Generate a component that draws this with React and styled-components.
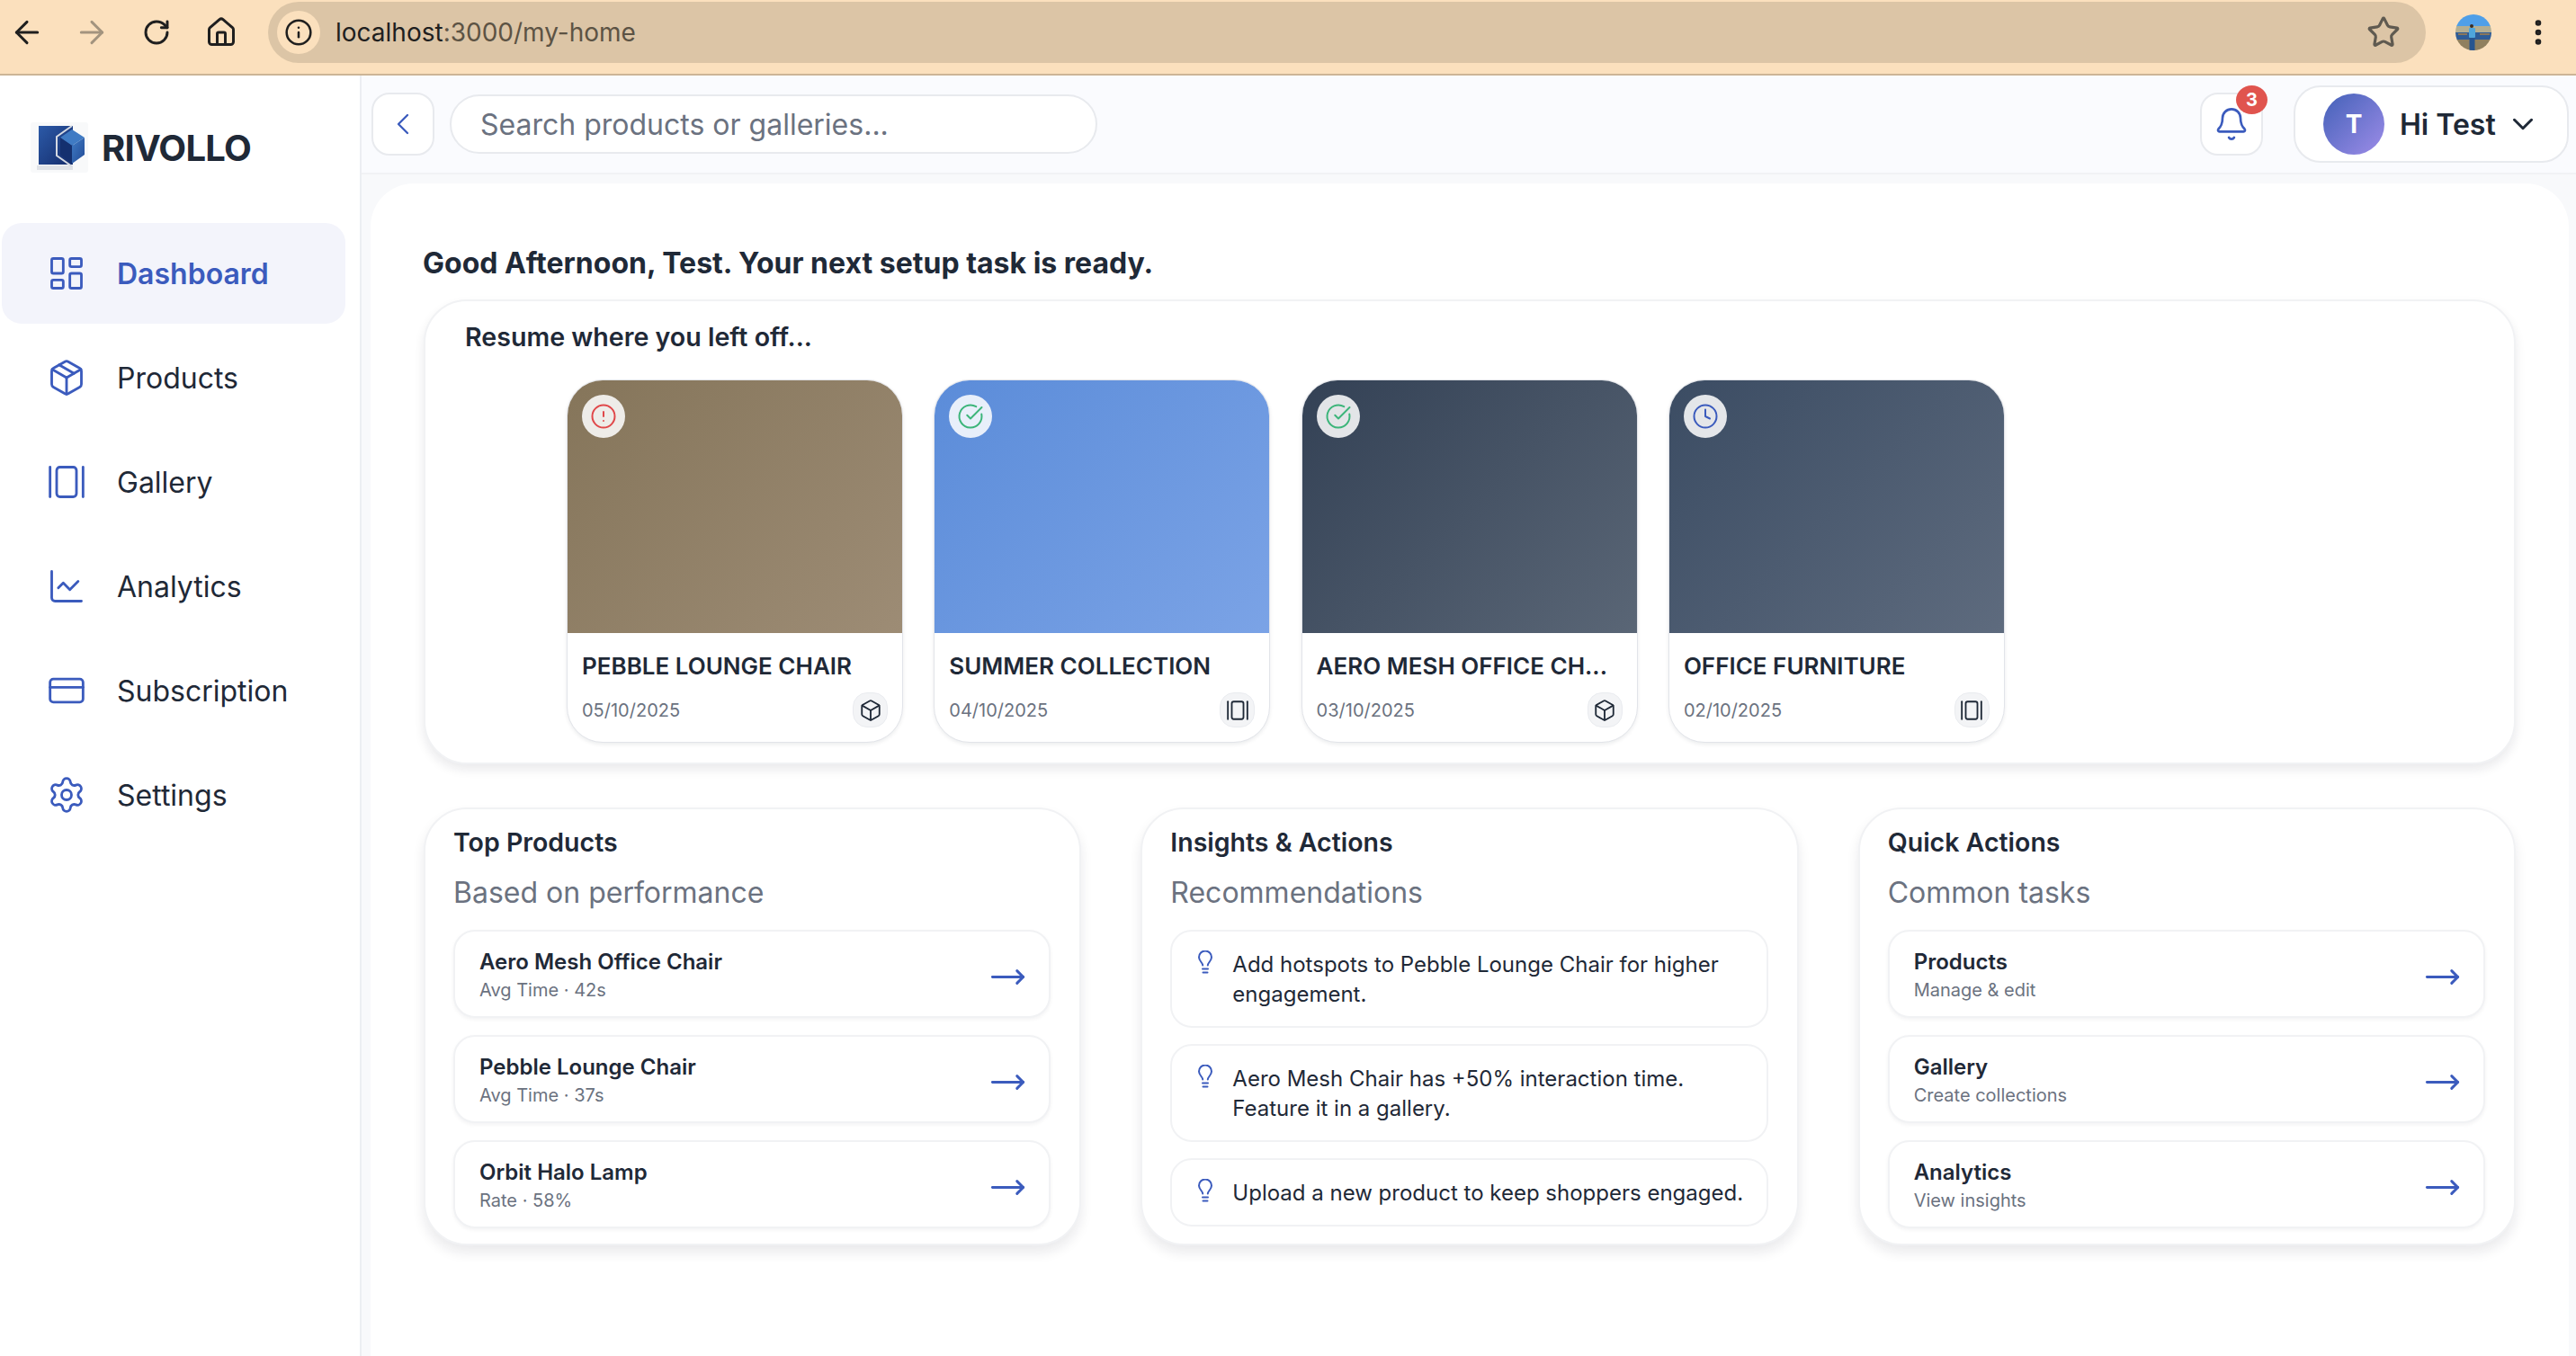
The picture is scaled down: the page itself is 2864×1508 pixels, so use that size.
import React from 'react';
import styled, { createGlobalStyle } from 'styled-components';
import {
  ArrowLeft, ArrowRight, RotateCw, House, Info, Star, EllipsisVertical,
  LayoutDashboard, Package, GalleryHorizontal, ChartLine, CreditCard, Settings,
  ChevronLeft, ChevronDown, Bell, CircleAlert, CircleCheckBig, Clock, Box, MoveRight,
} from 'lucide-react';

const BLUE = '#3b5bbd';
const INK = '#1f2937';
const MUTED = '#6b7280';

const GlobalStyle = createGlobalStyle`
  html, body { margin: 0; padding: 0; height: 100%; }
  body { font-family: Inter, "Liberation Sans", sans-serif; color: ${INK}; background: #fff; }
  #root { height: 100%; }
  * { box-sizing: border-box; }
`;

const Page = styled.div`
  height: 100vh;
  display: flex;
  flex-direction: column;
  overflow: hidden;
`;

/* browser chrome */
const BrowserBar = styled.div`
  height: 84px;
  flex: none;
  display: flex;
  align-items: flex-start;
  gap: 32px;
  padding: 2px 24px 0 10px;
  background: #fbe0bd;
  border-bottom: 2px solid #ccb596;
`;
const ChromeButton = styled.div`
  height: 68px;
  display: flex;
  align-items: center;
  color: ${p => (p.$dim ? '#a3947f' : '#1f1f1f')};
`;
const UrlPill = styled.div`
  flex: 1;
  height: 68px;
  display: flex;
  align-items: center;
  gap: 17px;
  padding: 0 28px 0 10px;
  border-radius: 34px;
  background: #dcc5a6;
`;
const InfoChip = styled.div`
  width: 48px;
  height: 48px;
  border-radius: 50%;
  background: #fbe0bd;
  display: flex;
  align-items: center;
  justify-content: center;
  color: #1f1f1f;
`;
const UrlText = styled.div`
  flex: 1;
  font-size: 28px;
  color: #5c5344;
  span { color: #1f1f1f; }
`;
const ChromeRight = styled.div`
  height: 68px;
  display: flex;
  align-items: center;
  gap: 34px;
  margin-left: 1px;
  color: #1f1f1f;
`;

/* app shell */
const Shell = styled.div`
  flex: 1;
  min-height: 0;
  display: flex;
`;
const Sidebar = styled.aside`
  width: 402px;
  flex: none;
  padding: 52px 0 0 2px;
  background: #fff;
  border-right: 2px solid #eceef2;
`;
const Logo = styled.div`
  display: flex;
  align-items: center;
  gap: 15px;
  padding-left: 32px;
  margin-bottom: 56px;
`;
const LogoWord = styled.div`
  font-size: 40px;
  font-weight: 700;
  letter-spacing: -0.8px;
  color: ${INK};
`;
const Nav = styled.nav`
  width: 382px;
  display: flex;
  flex-direction: column;
  gap: 4px;
`;
const NavItem = styled.div`
  height: 112px;
  display: flex;
  align-items: center;
  gap: 34px;
  padding-left: 50px;
  border-radius: 22px;
  font-size: 32px;
  font-weight: ${p => (p.$active ? 600 : 400)};
  color: ${p => (p.$active ? BLUE : INK)};
  background: ${p => (p.$active ? '#f3f4fb' : 'transparent')};
  svg { color: ${BLUE}; }
`;

const Main = styled.div`
  flex: 1;
  min-width: 0;
  display: flex;
  flex-direction: column;
  background: #f8f9fb;
`;
const TopBar = styled.header`
  height: 110px;
  flex: none;
  display: flex;
  align-items: center;
  padding: 0 8px 0 11px;
  background: #fafbfe;
  border-bottom: 2px solid #f1f2f5;
`;
const SquareButton = styled.div`
  position: relative;
  width: 70px;
  height: 70px;
  flex: none;
  display: flex;
  align-items: center;
  justify-content: center;
  background: #fff;
  border: 2px solid #e8eaee;
  border-radius: 20px;
  color: ${BLUE};
`;
const SearchBox = styled.div`
  width: 720px;
  height: 66px;
  margin-left: 17px;
  padding-left: 32px;
  display: flex;
  align-items: center;
  border: 2px solid #e8eaee;
  border-radius: 33px;
  background: #fff;
  font-size: 32px;
  color: ${MUTED};
`;
const Spacer = styled.div`
  flex: 1;
`;
const Badge = styled.div`
  position: absolute;
  top: -10px;
  right: -7px;
  width: 35px;
  height: 32px;
  border-radius: 50%;
  display: flex;
  align-items: center;
  justify-content: center;
  background: #e0544e;
  color: #fff;
  font-size: 20px;
  font-weight: 700;
`;
const UserPill = styled.div`
  width: 306px;
  height: 86px;
  margin-left: 34px;
  padding-left: 31px;
  display: flex;
  align-items: center;
  background: #fff;
  border: 2px solid #e8eaee;
  border-radius: 30px;
  font-size: 32px;
  font-weight: 600;
  color: ${INK};
`;
const Avatar = styled.div`
  width: 68px;
  height: 68px;
  margin-right: 17px;
  border-radius: 50%;
  display: flex;
  align-items: center;
  justify-content: center;
  background: linear-gradient(135deg, #4361b8, #9d8ce8);
  color: #fff;
  font-size: 28px;
  font-weight: 700;
`;
const UserCaret = styled.div`
  display: flex;
  margin-left: 11px;
`;
const ContentWrap = styled.main`
  flex: 1;
  min-height: 0;
  padding: 10px 8px 0 10px;
`;
const Content = styled.div`
  height: 100%;
  padding: 69px 59px 0;
  background: #fff;
  border-radius: 48px 48px 0 0;
`;
const Greeting = styled.h1`
  margin: 0 0 21px -1px;
  font-size: 32px;
  line-height: 39px;
  font-weight: 700;
  color: ${INK};
`;
const ResumeCard = styled.section`
  height: 517px;
  padding: 20px 44px 0;
  background: #fff;
  border: 2px solid #f1f2f4;
  border-radius: 48px;
  box-shadow: 0 6px 12px rgba(17, 24, 39, 0.09);
`;
const ResumeTitle = styled.h2`
  margin: 0 0 27px;
  font-size: 28.6px;
  line-height: 40px;
  font-weight: 600;
  color: ${INK};
`;
const CardRow = styled.div`
  display: flex;
  gap: 34.3px;
  padding-left: 113px;
`;
const Card = styled.article`
  position: relative;
  width: 374px;
  height: 404px;
  flex: none;
  overflow: hidden;
  background: #fff;
  border: 1px solid #e2e4e9;
  border-radius: 40px;
  box-shadow: 0 2px 4px rgba(17, 24, 39, 0.08);
`;
const CardImage = styled.div`
  height: 281px;
  background: ${p => p.$bg};
`;
const StatusDot = styled.div`
  position: absolute;
  top: 16px;
  left: 16px;
  width: 48px;
  height: 48px;
  border-radius: 50%;
  display: flex;
  align-items: center;
  justify-content: center;
  background: rgba(255, 255, 255, 0.86);
  color: ${p => p.$color};
`;
const CardBody = styled.div`
  padding: 19px 16px 0 16px;
`;
const CardTitle = styled.div`
  font-size: 26px;
  line-height: 35px;
  font-weight: 600;
  white-space: nowrap;
  color: ${INK};
`;
const CardMeta = styled.div`
  margin-top: 12px;
  display: flex;
  align-items: center;
  justify-content: space-between;
  font-size: 20px;
  color: ${MUTED};
`;
const TypeChip = styled.div`
  width: 39px;
  height: 39px;
  display: flex;
  align-items: center;
  justify-content: center;
  background: #f3f4f6;
  border: 1px solid #e9ebef;
  border-radius: 16px;
  color: ${INK};
`;
const Panels = styled.div`
  margin-top: 48px;
  display: grid;
  grid-template-columns: repeat(3, 1fr);
  gap: 66px;
`;
const Panel = styled.section`
  height: 487px;
  padding: 18px 32px 0 31px;
  background: #fff;
  border: 2px solid #f1f2f4;
  border-radius: 48px;
  box-shadow: 0 8px 14px rgba(17, 24, 39, 0.09);
`;
const PanelTitle = styled.h3`
  margin: 0;
  font-size: 28.5px;
  line-height: 38px;
  font-weight: 600;
  color: ${INK};
`;
const PanelSub = styled.p`
  margin: 15px 0 19px;
  font-size: 32px;
  line-height: 44px;
  color: ${MUTED};
`;
const RowList = styled.div`
  display: flex;
  flex-direction: column;
  gap: ${p => p.$gap}px;
`;
const LinkRow = styled.div`
  height: 98px;
  display: flex;
  align-items: center;
  justify-content: space-between;
  padding: 2px 25px 0 27px;
  background: #fff;
  border: 2px solid #f1f2f4;
  border-radius: 24px;
  box-shadow: 0 2px 4px rgba(17, 24, 39, 0.05);
  svg { color: ${BLUE}; margin-top: 5px; }
`;
const RowName = styled.div`
  font-size: 24px;
  line-height: 32px;
  font-weight: 600;
  color: ${INK};
`;
const RowHint = styled.div`
  margin-top: 1px;
  font-size: 20px;
  line-height: 28px;
  color: ${MUTED};
`;
const InsightRow = styled.div`
  min-height: 76px;
  display: flex;
  align-items: flex-start;
  gap: 22px;
  padding: 20px 16px 19px 29px;
  border: 2px solid #f1f2f4;
  border-radius: 24px;
  font-size: 24px;
  line-height: 33px;
  color: ${INK};
  svg { flex: none; margin-top: 1px; color: ${BLUE}; }
`;

const RivolloMark = () => (
  <svg width="64" height="56" viewBox="0 0 64 56">
    <defs>
      <linearGradient id="tile" x1="0" y1="0" x2="1" y2="1">
        <stop offset="0" stopColor="#2c5aa8" />
        <stop offset="1" stopColor="#142c6b" />
      </linearGradient>
      <linearGradient id="cube" x1="0" y1="0" x2="1" y2="1">
        <stop offset="0" stopColor="#3f7bc4" />
        <stop offset="1" stopColor="#224b97" />
      </linearGradient>
    </defs>
    <rect width="64" height="56" rx="3" fill="#f8f9fa" />
    <rect x="7" y="48" width="40" height="5" fill="#dfe2e7" />
    <rect x="9" y="4" width="38" height="43" fill="url(#tile)" />
    <path d="M46 4L29 16V37L46 49" fill="none" stroke="#d5dae3" strokeWidth="2" />
    <path d="M46 8L60 17L46 26L33 17Z" fill="#3f7bc4" />
    <path d="M60 17V36L46 46V26Z" fill="url(#cube)" />
    <path d="M33 17L46 26V46L33 36Z" fill="#14306f" />
  </svg>
);

const ProfilePhoto = () => (
  <svg width="40" height="40" viewBox="0 0 40 40">
    <defs>
      <clipPath id="photo"><circle cx="20" cy="20" r="20" /></clipPath>
    </defs>
    <g clipPath="url(#photo)">
      <rect width="40" height="14" fill="#4f9fe8" />
      <rect y="13" width="40" height="8" fill="#b3ae92" />
      <rect y="20" width="40" height="9" fill="#2f5c96" />
      <rect y="28" width="40" height="12" fill="#90805f" />
      <rect x="3" y="21" width="10" height="2" fill="#8a775b" />
      <rect x="27" y="21" width="11" height="2" fill="#8a775b" />
      <circle cx="18" cy="13" r="2" fill="#3a2c22" />
      <rect x="15" y="15" width="7" height="11" rx="1" fill="#4fa6dc" />
      <rect x="15.5" y="26" width="6" height="14" fill="#27558f" />
    </g>
  </svg>
);

const Bulb = () => (
  <svg width="16" height="26" viewBox="0 0 16 26" fill="none" stroke="currentColor" strokeWidth="2" strokeLinecap="round" strokeLinejoin="round">
    <path d="M5.2 16.5C5 13.5 1 11.5 1 7.5a7 7 0 0 1 14 0c0 4-4 6-4.2 9" />
    <path d="M5 20.5h6M5.5 24.5h5" />
  </svg>
);

const navItems = [
  { label: 'Dashboard', Icon: LayoutDashboard, active: true },
  { label: 'Products', Icon: Package },
  { label: 'Gallery', Icon: GalleryHorizontal },
  { label: 'Analytics', Icon: ChartLine },
  { label: 'Subscription', Icon: CreditCard },
  { label: 'Settings', Icon: Settings },
];

const recent = [
  { title: 'PEBBLE LOUNGE CHAIR', date: '05/10/2025', bg: 'linear-gradient(135deg, #85755a, #9d8c75)', Status: CircleAlert, color: '#e0484a', Type: Box },
  { title: 'SUMMER COLLECTION', date: '04/10/2025', bg: 'linear-gradient(135deg, #5b8cd9, #7ba3e6)', Status: CircleCheckBig, color: '#3cb57a', Type: GalleryHorizontal },
  { title: 'AERO MESH OFFICE CH...', date: '03/10/2025', bg: 'linear-gradient(135deg, #334155, #5a6676)', Status: CircleCheckBig, color: '#3cb57a', Type: Box },
  { title: 'OFFICE FURNITURE', date: '02/10/2025', bg: 'linear-gradient(135deg, #3b4c63, #5e6b7e)', Status: Clock, color: BLUE, Type: GalleryHorizontal },
];

const topProducts = [
  ['Aero Mesh Office Chair', 'Avg Time · 42s'],
  ['Pebble Lounge Chair', 'Avg Time · 37s'],
  ['Orbit Halo Lamp', 'Rate · 58%'],
];
const quickActions = [
  ['Products', 'Manage & edit'],
  ['Gallery', 'Create collections'],
  ['Analytics', 'View insights'],
];
const insights = [
  'Add hotspots to Pebble Lounge Chair for higher engagement.',
  'Aero Mesh Chair has +50% interaction time. Feature it in a gallery.',
  'Upload a new product to keep shoppers engaged.',
];

const LinkPanel = ({ title, sub, rows }) => (
  <Panel>
    <PanelTitle>{title}</PanelTitle>
    <PanelSub>{sub}</PanelSub>
    <RowList $gap={19}>
      {rows.map(([name, hint]) => (
        <LinkRow key={name}>
          <div>
            <RowName>{name}</RowName>
            <RowHint>{hint}</RowHint>
          </div>
          <MoveRight size={41} strokeWidth={1.75} />
        </LinkRow>
      ))}
    </RowList>
  </Panel>
);

export default function App() {
  return (
    <Page>
      <GlobalStyle />
      <BrowserBar>
        <ChromeButton><ArrowLeft size={40} strokeWidth={1.8} /></ChromeButton>
        <ChromeButton $dim><ArrowRight size={40} strokeWidth={1.8} /></ChromeButton>
        <ChromeButton><RotateCw size={32} strokeWidth={2.2} style={{ margin: '0 4px' }} /></ChromeButton>
        <ChromeButton><House size={36} strokeWidth={2} style={{ margin: '0 2px' }} /></ChromeButton>
        <UrlPill>
          <InfoChip><Info size={32} strokeWidth={1.9} /></InfoChip>
          <UrlText><span>localhost</span>:3000/my-home</UrlText>
          <Star size={38} strokeWidth={2} color="#5f5a50" />
        </UrlPill>
        <ChromeRight>
          <ProfilePhoto />
          <EllipsisVertical size={36} strokeWidth={2.4} />
        </ChromeRight>
      </BrowserBar>

      <Shell>
        <Sidebar>
          <Logo>
            <RivolloMark />
            <LogoWord>RIVOLLO</LogoWord>
          </Logo>
          <Nav>
            {navItems.map(({ label, Icon, active }) => (
              <NavItem key={label} $active={active}>
                <Icon size={44} strokeWidth={1.55} />
                {label}
              </NavItem>
            ))}
          </Nav>
        </Sidebar>

        <Main>
          <TopBar>
            <SquareButton><ChevronLeft size={40} strokeWidth={1.4} /></SquareButton>
            <SearchBox>Search products or galleries...</SearchBox>
            <Spacer />
            <SquareButton>
              <Bell size={40} strokeWidth={1.6} />
              <Badge>3</Badge>
            </SquareButton>
            <UserPill>
              <Avatar>T</Avatar>
              Hi Test
              <UserCaret><ChevronDown size={38} strokeWidth={1.9} /></UserCaret>
            </UserPill>
          </TopBar>

          <ContentWrap>
            <Content>
              <Greeting>Good Afternoon, Test. Your next setup task is ready.</Greeting>
              <ResumeCard>
                <ResumeTitle>Resume where you left off...</ResumeTitle>
                <CardRow>
                  {recent.map(({ title, date, bg, Status, color, Type }) => (
                    <Card key={title}>
                      <CardImage $bg={bg} />
                      <StatusDot $color={color}><Status size={30} strokeWidth={1.6} /></StatusDot>
                      <CardBody>
                        <CardTitle>{title}</CardTitle>
                        <CardMeta>
                          {date}
                          <TypeChip><Type size={26} strokeWidth={1.7} /></TypeChip>
                        </CardMeta>
                      </CardBody>
                    </Card>
                  ))}
                </CardRow>
              </ResumeCard>

              <Panels>
                <LinkPanel title="Top Products" sub="Based on performance" rows={topProducts} />
                <Panel>
                  <PanelTitle>Insights &amp; Actions</PanelTitle>
                  <PanelSub>Recommendations</PanelSub>
                  <RowList $gap={18}>
                    {insights.map(text => (
                      <InsightRow key={text}>
                        <Bulb />
                        <div>{text}</div>
                      </InsightRow>
                    ))}
                  </RowList>
                </Panel>
                <LinkPanel title="Quick Actions" sub="Common tasks" rows={quickActions} />
              </Panels>
            </Content>
          </ContentWrap>
        </Main>
      </Shell>
    </Page>
  );
}
